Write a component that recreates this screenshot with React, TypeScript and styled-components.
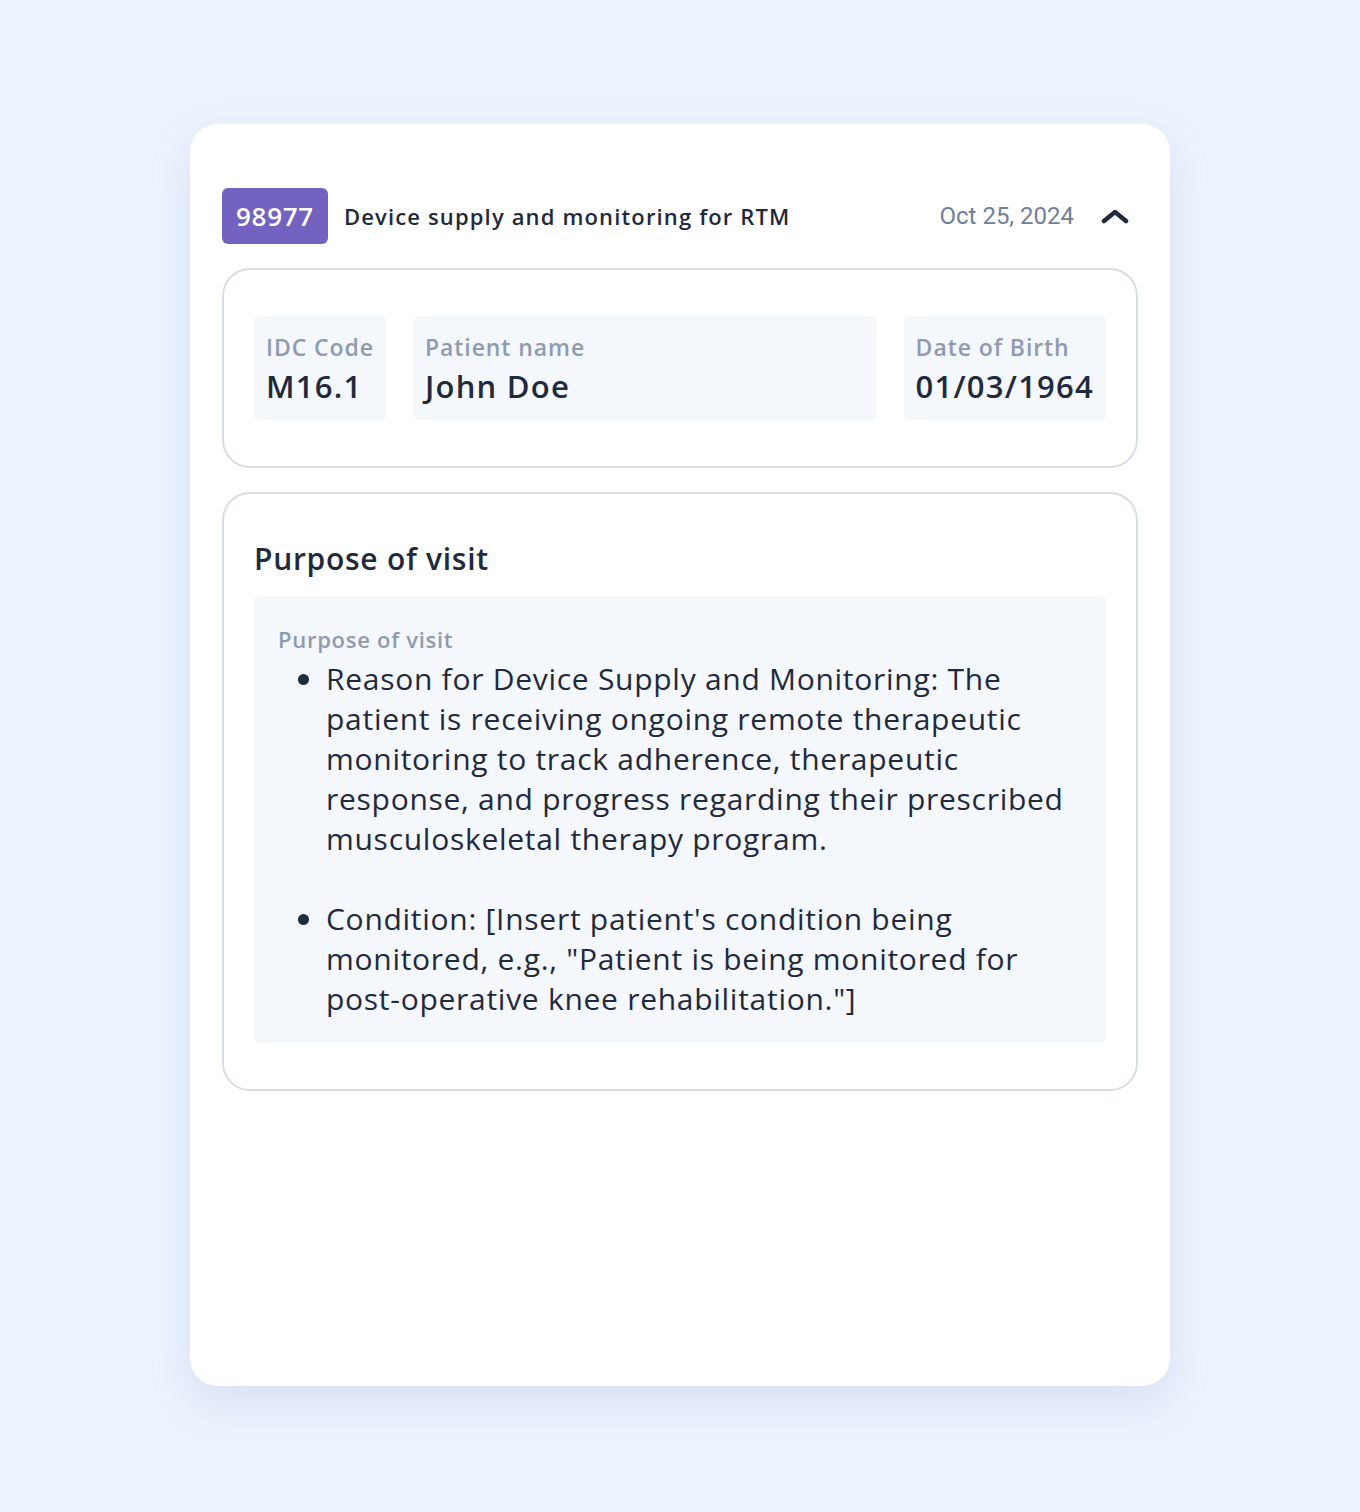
import React from "react";
import styled, { createGlobalStyle } from "styled-components";

const Global = createGlobalStyle`
  html, body { margin: 0; padding: 0; background: #edf3fc; }
  body { font-family: "Open Sans", "Noto Sans", sans-serif; color: #1f2a3c; letter-spacing: 0.045em; }
`;

const Page = styled.div`
  min-height: 1512px;
  display: flex;
  justify-content: center;
  padding-top: 124px;
  box-sizing: border-box;
`;

const Card = styled.div`
  width: 980px;
  height: 1262px;
  box-sizing: border-box;
  background: #fff;
  border-radius: 28px;
  box-shadow: 0 16px 40px rgba(140, 160, 220, 0.22);
  padding: 64px 32px 32px;
  display: flex;
  flex-direction: column;
  gap: 24px;
`;

const Header = styled.div`
  display: flex;
  align-items: center;
  height: 56px;
`;

const Badge = styled.div`
  background: #7462c0;
  color: #fff;
  border-radius: 6px;
  height: 56px;
  padding: 0 14px;
  display: flex;
  align-items: center;
  font-size: 26px;
  font-weight: 600;
`;

const Title = styled.div`
  margin-left: 16px;
  font-size: 22px;
  letter-spacing: 0.052em;
  font-weight: 600;
  color: #1f2a3c;
  flex: 1;
`;

const DateText = styled.div`
  font-family: Roboto, sans-serif;
  letter-spacing: 0;
  font-size: 24px;
  color: #718096;
`;

const Chevron = styled.div`
  width: 30px;
  margin-left: 26px;
  margin-right: 8px;
  display: flex;
  align-items: center;
  justify-content: center;
`;

const Section = styled.div<{ $py: number }>`
  border: 2px solid #d9dee6;
  border-radius: 28px;
  padding: ${(p) => p.$py - 2}px 30px;
`;

const Fields = styled.div`
  display: flex;
  gap: 27px;
`;

const Field = styled.div<{ $grow?: boolean }>`
  background: #f4f7fc;
  border-radius: 6px;
  padding: 14px 12px 14px;
  height: 104px;
  box-sizing: border-box;
  flex: ${(p) => (p.$grow ? 1 : "0 0 auto")};
`;

const Label = styled.div`
  font-size: 23px;
  line-height: 34px;
  letter-spacing: 0.04em;
  color: #8f9bb0;
  font-weight: 600;
`;

const Value = styled.div`
  padding-top: 2px;
  font-size: 31px;
  line-height: 40px;
  letter-spacing: 0.04em;
  font-weight: 600;
  color: #1f2a3c;
`;

const SectionTitle = styled.h2`
  margin: 0 0 19px;
  padding-top: 1px;
  font-size: 30px;
  line-height: 36px;
  font-weight: 600;
  color: #1f2a3c;
`;

const NoteBox = styled.div`
  background: #f4f7fc;
  border-radius: 6px;
  padding: 24px 24px 24px;
`;

const NoteLabel = styled.div`
  font-size: 22px;
  line-height: 39px;
  color: #8f9bb0;
  font-weight: 600;
`;

const List = styled.ul`
  margin: 0;
  padding-left: 48px;
  font-size: 30px;
  line-height: 40px;
  color: #1f2a3c;
  & > li + li { margin-top: 40px; }
`;

export default function App() {
  return (
    <>
      <Global />
      <Page>
        <Card>
          <Header>
            <Badge>98977</Badge>
            <Title>Device supply and monitoring for RTM</Title>
            <DateText>Oct 25, 2024</DateText>
            <Chevron>
              <svg width="28" height="18" viewBox="0 0 28 18" fill="none">
                <path d="M3 14 L14 5 L25 14" stroke="#1f2a3c" strokeWidth="4.5" strokeLinecap="round" strokeLinejoin="round" />
              </svg>
            </Chevron>
          </Header>
          <Section $py={48}>
            <Fields>
              <Field>
                <Label>IDC Code</Label>
                <Value>M16.1</Value>
              </Field>
              <Field $grow>
                <Label>Patient name</Label>
                <Value>John Doe</Value>
              </Field>
              <Field>
                <Label>Date of Birth</Label>
                <Value>01/03/1964</Value>
              </Field>
            </Fields>
          </Section>
          <Section $py={48}>
            <SectionTitle>Purpose of visit</SectionTitle>
            <NoteBox>
              <NoteLabel>Purpose of visit</NoteLabel>
              <List>
                <li>
                  Reason for Device Supply and Monitoring: The patient is receiving ongoing remote therapeutic
                  monitoring to track adherence, therapeutic response, and progress regarding their prescribed
                  musculoskeletal therapy program.
                </li>
                <li>
                  Condition: [Insert patient's condition being monitored, e.g., "Patient is being monitored for
                  post-operative knee rehabilitation."]
                </li>
              </List>
            </NoteBox>
          </Section>
        </Card>
      </Page>
    </>
  );
}
